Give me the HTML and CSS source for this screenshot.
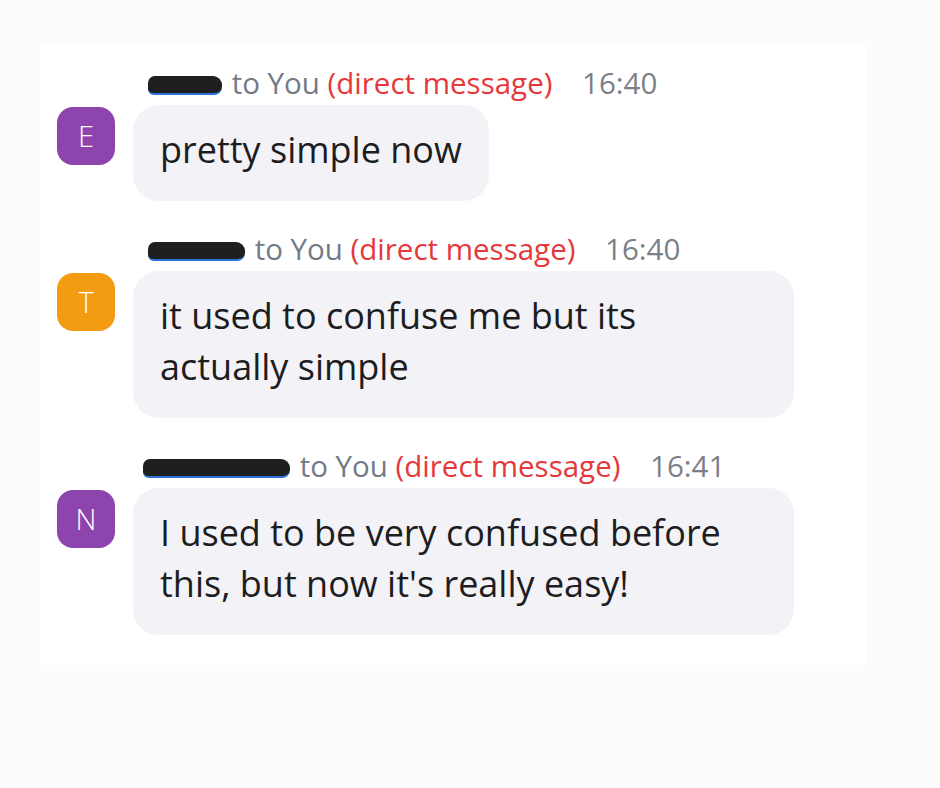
FILE: index.html
```html
<!DOCTYPE html>
<html lang="en">
<head>
  <meta charset="UTF-8" />
  <meta name="viewport" content="width=device-width, initial-scale=1" />
  <title>Chat - Direct messages</title>
  <link rel="stylesheet" href="styles.css">
</head>
<body>

  <!-- Chat panel -->
  <div class="chat">

    <div class="message">
      <div class="meta">
        <span class="name name-short"></span>
        <span class="to">to You</span>
        <span class="dm">(direct message)</span>
        <span class="time">16:40</span>
      </div>
      <div class="avatar purple">E</div>
      <div class="bubble">pretty simple now</div>
    </div>

    <div class="message">
      <div class="meta">
        <span class="name name-mid"></span>
        <span class="to">to You</span>
        <span class="dm">(direct message)</span>
        <span class="time">16:40</span>
      </div>
      <div class="avatar orange">T</div>
      <div class="bubble">it used to confuse me but its actually simple</div>
    </div>

    <div class="message">
      <div class="meta">
        <span class="name name-long"></span>
        <span class="to">to You</span>
        <span class="dm">(direct message)</span>
        <span class="time">16:41</span>
      </div>
      <div class="avatar purple">N</div>
      <div class="bubble">I used to be very confused before this, but now it's really easy!</div>
    </div>

  </div>

</body>
</html>
```

FILE: styles.css
```css
html {
  background: #fcfcfc;
}
body {
  margin: 0;
  font-family: "Open Sans", "Noto Sans", sans-serif;
  color: #1d1d1f;
}
.chat {
  margin: 42px 74px 0 40px;
  padding: 23px 0 30px 17px;
  background: #fff;
}
.message {
  display: grid;
  grid-template-columns: 58px auto;
  column-gap: 18px;
  justify-content: start;
  margin-bottom: 30px;
}
.message:last-child {
  margin-bottom: 0;
}
.meta {
  grid-column: 2;
  padding-left: 15px;
  margin-bottom: 4px;
  font-size: 29.5px;
  line-height: 36px;
  white-space: nowrap;
}
.name {
  display: inline-block;
  height: 17px;
  margin-right: 2px;
  background: #1f1f1f;
  border-radius: 7px 9px 8px 6px;
  border-bottom: 2px solid #2b73d6;
  vertical-align: -1px;
}
.name-short {
  width: 74px;
}
.name-mid {
  width: 97px;
}
.name-long {
  width: 147px;
  margin-left: -5px;
}
.to {
  color: #737a87;
}
.dm {
  color: #e5383b;
}
.time {
  margin-left: 22px;
  color: #7b7f88;
}
.avatar {
  grid-column: 1;
  width: 58px;
  height: 58px;
  margin-top: 2px;
  border-radius: 16px;
  color: #fff;
  font-size: 29px;
  font-weight: 300;
  line-height: 58px;
  text-align: center;
}
.purple {
  background: #8e44ad;
}
.orange {
  background: #f39c12;
}
.bubble {
  grid-column: 2;
  max-width: 661px;
  box-sizing: border-box;
  padding: 19px 27px 26px;
  background: #f2f2f7;
  border-radius: 26px;
  font-size: 36px;
  line-height: 51px;
  justify-self: start;
}
```
